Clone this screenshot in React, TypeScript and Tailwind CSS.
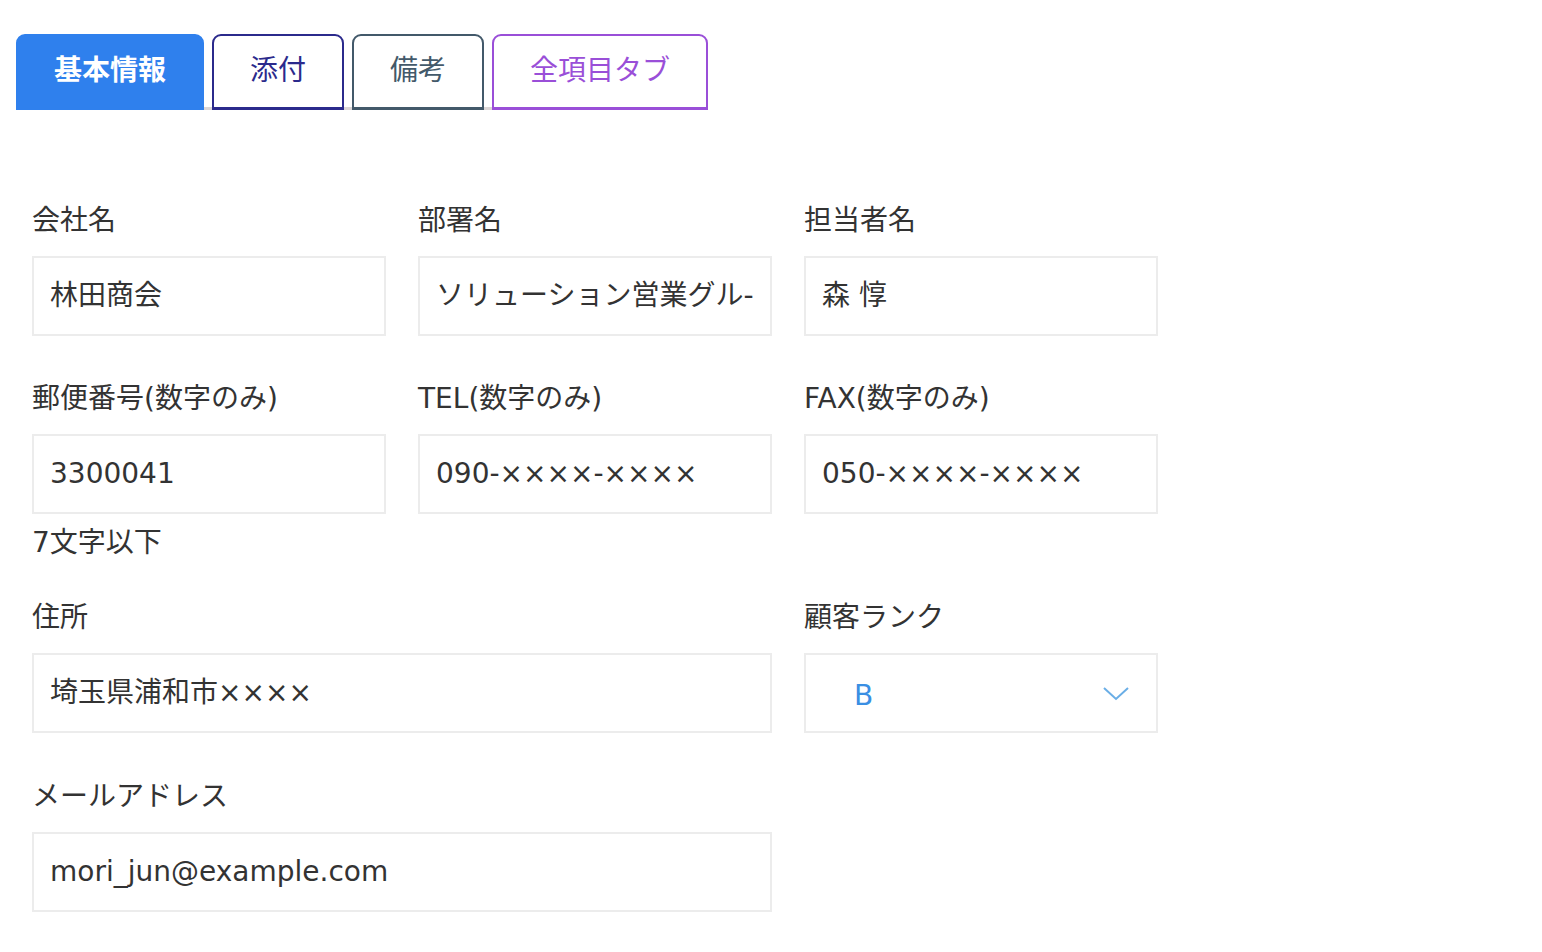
import React from "react";

const font = { fontFamily: '"DejaVu Sans", "Noto Sans CJK JP", sans-serif' };
const cjk = { fontFamily: '"Noto Sans CJK JP", "Noto Sans", sans-serif' };

type TabDef = { label: string; cls: string };

const tabs: TabDef[] = [
  {
    label: "基本情報",
    cls: "w-[188px] bg-[#2f80ed] text-white font-bold border-2 border-[#2f80ed] border-b-[3px]",
  },
  {
    label: "添付",
    cls: "w-[132px] bg-white text-[#2b2a8c] border-2 border-[#2b2a8c] border-b-[3px]",
  },
  {
    label: "備考",
    cls: "w-[132px] bg-white text-[#43596a] border-2 border-[#43596a] border-b-[3px]",
  },
  {
    label: "全項目タブ",
    cls: "w-[216px] bg-white text-[#9a4fd8] border-2 border-[#9a4fd8] border-b-[3px]",
  },
];

function Label({ children }: { children: React.ReactNode }) {
  return (
    <div className="pt-[3px] text-[28px] leading-[42px] text-[#333] whitespace-nowrap">{children}</div>
  );
}

function TextBox({ value }: { value: string }) {
  return (
    <div className="mt-[14px] h-[80px] border-2 border-[#ececec] bg-white flex items-center pl-[16px] pr-[12px] overflow-hidden">
      <span className="text-[28px] text-[#333] whitespace-nowrap overflow-hidden">{value}</span>
    </div>
  );
}

function Field({ label, value }: { label: string; value: string }) {
  return (
    <div>
      <Label>{label}</Label>
      <TextBox value={value} />
    </div>
  );
}

const row = "grid grid-cols-[354px_354px_354px] gap-x-8";

export default function App() {
  return (
    <div className="min-h-[952px] bg-white" style={font}>
      <div className="pl-4 pt-[34px]" style={cjk}>
        {/* tab strip */}
        <div className="inline-flex gap-2 border-b-[3px] border-[#dcd6d6] align-top">
          {tabs.map((t) => (
            <div
              key={t.label}
              className={`h-[76px] -mb-[3px] pb-[7px] rounded-t-[9px] flex items-center justify-center text-[28px] ${t.cls}`}
            >
              {t.label}
            </div>
          ))}
        </div>
      </div>

      <div className="pl-8 mt-[87px]">
        <div className={row}>
          <Field label="会社名" value="林田商会" />
          <Field label="部署名" value="ソリューション営業グル-" />
          <Field label="担当者名" value="森 惇" />
        </div>

        <div className={`${row} mt-[39px]`}>
          <div>
            <Field label="郵便番号(数字のみ)" value="3300041" />
            <div className="mt-[8px] text-[28px] leading-[42px] text-[#333]">7文字以下</div>
          </div>
          <Field label="TEL(数字のみ)" value="090-××××-××××" />
          <Field label="FAX(数字のみ)" value="050-××××-××××" />
        </div>

        <div className={`${row} mt-[30px]`}>
          <div className="col-span-2">
            <Field label="住所" value="埼玉県浦和市××××" />
          </div>
          <div>
            <Label>顧客ランク</Label>
            <div className="mt-[14px] h-[80px] border-2 border-[#ececec] bg-white flex items-center justify-between pl-[48px] pr-[26px]">
              <span className="pt-[5px] text-[28px] text-[#3a8fe3]">B</span>
              <svg width="28" height="16" viewBox="0 0 28 16" fill="none">
                <path d="M2 3 L14 14 L26 3" stroke="#6aaee6" strokeWidth="2" />
              </svg>
            </div>
          </div>
        </div>

        <div className={`${row} mt-[40px]`}>
          <div className="col-span-2">
            <Field label="メールアドレス" value="mori_jun@example.com" />
          </div>
        </div>
      </div>
    </div>
  );
}
